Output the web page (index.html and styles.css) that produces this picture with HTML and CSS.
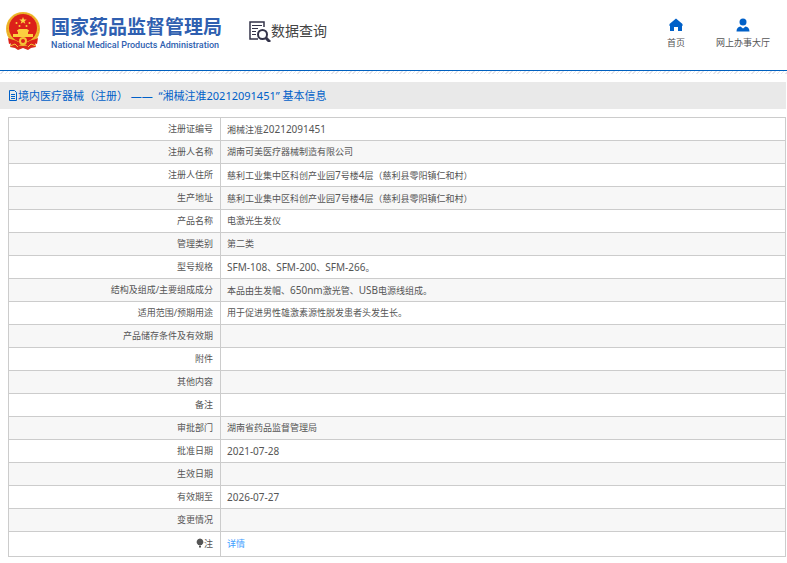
FILE: index.html
```html
<!DOCTYPE html>
<html lang="zh-CN">
<head>
<meta charset="utf-8">
<title>数据查询</title>
<link rel="stylesheet" href="styles.css">
</head>
<body>
<header class="site-header">
  <a class="brand" href="#">
    <svg class="emblem" viewBox="0 0 36 38" aria-hidden="true">
      <path d="M7 26 5 35l5 1 3 2 5-2 5 2 3-2 5-1-2-9z" fill="#d92a1c"/>
      <circle cx="18" cy="17" r="17" fill="#f0b92c"/>
      <circle cx="18" cy="17" r="15.500" fill="none" stroke="#e3a526" stroke-width="1" stroke-dasharray="2 1"/>
      <circle cx="18" cy="16" r="14" fill="#dc2019"/>
      <path d="m18 5 1 2.500h2.700l-2.200 1.700.8 2.600-2.300-1.600-2.300 1.600.8-2.600-2.200-1.700H17z" fill="#fbd644"/>
      <g fill="#fbcf3f"><circle cx="11.500" cy="11" r="1"/><circle cx="24.500" cy="11" r="1"/><circle cx="14.500" cy="14" r="1"/><circle cx="21.500" cy="14" r="1"/>
      <path d="M12 18.500 14 17h8l2 1.500v1h-1V22h5v3H8v-3h5v-2.500h-1z"/></g>
      <path d="M3 26c4 2 8 2 10 4l5-3 5 3c2-2 6-2 10-4l-1 6c-4-1-6 0-9 2l-5-3-5 3c-3-2-5-3-9-2z" fill="#dc2019"/>
      <circle cx="18" cy="29" r="3" fill="none" stroke="#f4c337" stroke-width="2"/>
      <path d="m5 34 5-2 3 3M31 34l-5-2-3 3" fill="none" stroke="#f4c337"/>
    </svg>
    <span class="brand-text">
      <span class="brand-zh">国家药品监督管理局</span>
      <span class="brand-en">National Medical Products Administration</span>
    </span>
  </a>
  <div class="section">
    <svg class="section-icon" viewBox="0 0 22 22" fill="none" stroke="#34344a" aria-hidden="true">
      <path d="M15 7V2H1v17h8" stroke-width="1.500"/>
      <path d="M3 5.500h10M3 8.500h6M3 11.500h4M3 14.500h4"/>
      <circle cx="13.500" cy="14.500" r="4.500" stroke-width="2"/>
      <path d="m17 18 4 4" stroke-width="3"/>
    </svg>
    <span>数据查询</span>
  </div>
  <nav class="nav">
    <a href="#">
      <svg viewBox="0 0 14 14" fill="#0060c8" aria-hidden="true"><path d="M7 .5 13.500 6v2H13v5H9V9H5v4H1V8H.5V6z"/></svg>
      <span>首页</span>
    </a>
    <a href="#">
      <svg viewBox="0 0 14 14" fill="#0060c8" aria-hidden="true"><circle cx="7" cy="4" r="3.500"/><path d="M.5 13.500c0-3 1.500-4.500 4-5L7 10.500l2.500-2c2.500.5 4 2 4 5z"/></svg>
      <span>网上办事大厅</span>
    </a>
  </nav>
</header>
<div class="hatch"></div>
<main>
  <h1 class="title">
    <svg viewBox="0 0 10 11" fill="none" stroke="#0060c8" aria-hidden="true"><path d="M1.500.5h5l2 2v8h-7zM3 4.500h4M3 6.500h4M3 8.500h4"/></svg>
    <span>境内医疗器械（注册） ——&nbsp; “湘械注准20212091451”&nbsp;基本信息</span>
  </h1>
  <table class="info">
    <tbody>
      <tr><th scope="row">注册证编号</th><td>湘械注准<span class="latin">20212091451</span></td></tr>
      <tr><th scope="row">注册人名称</th><td>湖南可美医疗器械制造有限公司</td></tr>
      <tr><th scope="row">注册人住所</th><td>慈利工业集中区科创产业园<span class="latin">7</span>号楼<span class="latin">4</span>层（慈利县零阳镇仁和村）</td></tr>
      <tr><th scope="row">生产地址</th><td>慈利工业集中区科创产业园<span class="latin">7</span>号楼<span class="latin">4</span>层（慈利县零阳镇仁和村）</td></tr>
      <tr><th scope="row">产品名称</th><td>电激光生发仪</td></tr>
      <tr><th scope="row">管理类别</th><td>第二类</td></tr>
      <tr><th scope="row">型号规格</th><td><span class="latin">SFM-108</span>、<span class="latin">SFM-200</span>、<span class="latin">SFM-266</span>。</td></tr>
      <tr><th scope="row">结构及组成/主要组成成分</th><td>本品由生发帽、<span class="latin">650nm</span>激光管、<span class="latin">USB</span>电源线组成。</td></tr>
      <tr><th scope="row">适用范围/预期用途</th><td>用于促进男性雄激素源性脱发患者头发生长。</td></tr>
      <tr><th scope="row">产品储存条件及有效期</th><td></td></tr>
      <tr><th scope="row">附件</th><td></td></tr>
      <tr><th scope="row">其他内容</th><td></td></tr>
      <tr><th scope="row">备注</th><td></td></tr>
      <tr><th scope="row">审批部门</th><td>湖南省药品监督管理局</td></tr>
      <tr><th scope="row">批准日期</th><td><span class="latin">2021-07-28</span></td></tr>
      <tr><th scope="row">生效日期</th><td></td></tr>
      <tr><th scope="row">有效期至</th><td><span class="latin">2026-07-27</span></td></tr>
      <tr><th scope="row">变更情况</th><td></td></tr>
      <tr><th scope="row"><svg class="bulb" viewBox="0 0 8 10" fill="#555" aria-hidden="true"><path d="M4 .5a3.500 3.500 0 0 1 2 6.300V7H2v-.2A3.500 3.500 0 0 1 4 .5zM3 7.500h2v2H3z"/></svg>注</th><td><a href="#">详情</a></td></tr>
    </tbody>
  </table>
</main>
</body>
</html>
```
FILE: styles.css
```css
* {
  box-sizing: border-box;
}

body {
  margin: 0;
  background: #fff;
  color: #555;
  font-family: "Noto Sans", "Noto Sans CJK SC", sans-serif;
  font-size: 9px;
}

a {
  color: inherit;
  text-decoration: none;
}

.site-header {
  display: flex;
  align-items: center;
  height: 71px;
  padding: 0 17px 8px 5px;
  border-bottom: 1px solid #0060bf;
}

.brand {
  display: flex;
  align-items: center;
  gap: 10px;
  color: #2f5fb0;
}

.emblem {
  width: 36px;
  height: 38px;
}

.brand-text {
  display: flex;
  flex-direction: column;
  padding-top: 4px;
}

.brand-zh {
  font-size: 19px;
  font-weight: 700;
  line-height: 24px;
}

.brand-en {
  font-family: Roboto, sans-serif;
  font-size: 9px;
  font-weight: 500;
  line-height: 12px;
}

.section {
  display: flex;
  align-items: center;
  margin-left: 27px;
  color: #444;
  font-size: 14px;
  line-height: 22px;
}

.section-icon {
  width: 22px;
  height: 22px;
}

.nav {
  display: flex;
  gap: 31px;
  margin-left: auto;
  padding-top: 6px;
}

.nav a {
  display: flex;
  flex-direction: column;
  align-items: center;
  gap: 4px;
  line-height: 14px;
}

.nav svg {
  width: 14px;
  height: 14px;
}

.hatch {
  height: 3px;
  background: repeating-linear-gradient(135deg, #fff 0 2px, #e4e4ea 2px 3px);
}

.title {
  display: flex;
  align-items: center;
  height: 27px;
  margin: 8px 0;
  padding-left: 8px;
  background: #e9e9e9;
  color: #0060c8;
  font-size: 11px;
  font-weight: 400;
  line-height: 16px;
}

.title svg {
  width: 10px;
  height: 11px;
}

main {
  padding-right: 1px;
}

.info {
  width: calc(100% - 8px);
  margin-left: 8px;
  border: 1px solid #ccc;
  border-collapse: collapse;
  table-layout: fixed;
}

.info th,
.info td {
  height: 23px;
  padding: 0 6px;
  border: 1px solid #ccc;
  font-weight: 400;
  line-height: 14px;
  text-align: left;
}

.info th {
  width: 212px;
  padding-right: 7px;
  text-align: right;
}

.info tr:nth-child(even) {
  background: #f7f7f7;
}

.info tr:last-child td {
  height: 25px;
}

.info td a {
  color: #409eff;
}

.latin {
  font-size: 10px;
}

.bulb {
  width: 8px;
  height: 10px;
  vertical-align: -1px;
}
```
